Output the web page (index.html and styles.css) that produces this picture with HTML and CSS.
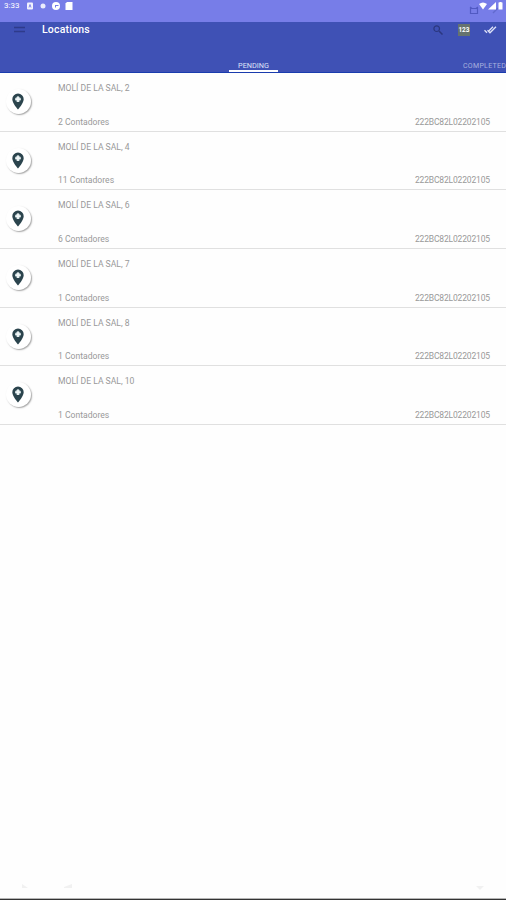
FILE: index.html
```html
<!DOCTYPE html>
<html lang="es">
<head>
  <meta charset="UTF-8" />
  <meta name="viewport" content="width=device-width, initial-scale=1.0" />
  <title>Locations</title>
  <link rel="stylesheet" href="styles.css">
</head>
<body>
  <!-- Icon shared by all rows -->
  <svg class="defs" width="0" height="0">
    <symbol id="pin" viewBox="0 0 12 17">
      <path fill="#2b444d" d="M6 .5a5.700 5.700 0 0 0-5.700 5.700c0 4 5.700 10.300 5.700 10.300s5.700-6.300 5.700-10.300A5.700 5.700 0 0 0 6 .5z"/>
      <circle cx="6" cy="6.200" r="2.700" fill="#9db3b8"/>
      <path d="M6 3.500v5.400M3.300 6.200h5.400" stroke="#f1f7f8" stroke-width="1.800"/>
    </symbol>
  </svg>

  <div class="status-bar">
    <span class="clock">3:33</span>
    <svg class="status-left" width="48" height="10" viewBox="0 0 48 10">
      <rect x="1" y="1.500" width="6" height="7" rx="1" fill="#fff" opacity=".9"/>
      <path d="M3 6.500l1-3 1 3" fill="none" stroke="#777de8" stroke-width=".9"/>
      <circle cx="17" cy="5" r="2.500" fill="#fff" opacity=".85"/>
      <circle cx="30" cy="5" r="4" fill="#fff"/>
      <path d="M29 4.500h3.500M29.500 4.500v2" fill="none" stroke="#777de8" stroke-width="1"/>
      <path d="M41 1h5.500v8h-7V2.500z" fill="#fff"/>
    </svg>
    <svg class="status-right" width="38" height="16" viewBox="0 0 38 16">
      <path d="M2.500 8.500h7v5h-7zM2 7l2 1.500M10 7l-2 1.500" fill="none" stroke="#5159c2" stroke-width="1.200"/>
      <path d="M25 13l5-5" fill="none" stroke="#626ace" stroke-width="1.500"/>
      <path d="M11 4q4-3 8 0L15 9.500z" fill="#fff"/>
      <path d="M28 2v7.500h-8z" fill="#fff"/>
      <path d="M30.500 2.500h1V2h2v.5h1v7h-4z" fill="#fff"/>
    </svg>
  </div>

  <header class="app-bar">
    <div class="toolbar">
      <svg class="menu" width="12" height="8" viewBox="0 0 12 8">
        <path d="M0 1.500h11M0 5.500h11" stroke="#2e3b8b" stroke-width="1.500"/>
      </svg>
      <h1>Locations</h1>
      <svg class="search" width="10" height="10" viewBox="0 0 10 10">
        <circle cx="3.700" cy="3.700" r="2.800" fill="none" stroke="#2b377f" stroke-width="1.200"/>
        <path d="M6 6l3.500 3.500" stroke="#2b377f" stroke-width="1.500"/>
      </svg>
      <span class="counter">123</span>
      <svg class="done-all" width="13" height="8" viewBox="0 0 13 8">
        <path d="M.5 4.300L3 6.800M3.500 4.300L6 6.800 12 .8M5 4.800l4-4" fill="none" stroke="#dfe3f8" stroke-width="1.300"/>
      </svg>
    </div>
    <nav class="tabs">
      <span class="tab active">PENDING</span>
      <span class="tab next">COMPLETED</span>
    </nav>
  </header>

  <ul class="locations">
    <li class="location">
      <span class="avatar"><svg width="12" height="17"><use href="#pin"/></svg></span>
      <div class="info">
        <p>MOLÍ DE LA SAL, 2</p>
        <p class="details"><span>2 Contadores</span><span class="serial">222BC82L02202105</span></p>
      </div>
    </li>
    <li class="location">
      <span class="avatar"><svg width="12" height="17"><use href="#pin"/></svg></span>
      <div class="info">
        <p>MOLÍ DE LA SAL, 4</p>
        <p class="details"><span>11 Contadores</span><span class="serial">222BC82L02202105</span></p>
      </div>
    </li>
    <li class="location">
      <span class="avatar"><svg width="12" height="17"><use href="#pin"/></svg></span>
      <div class="info">
        <p>MOLÍ DE LA SAL, 6</p>
        <p class="details"><span>6 Contadores</span><span class="serial">222BC82L02202105</span></p>
      </div>
    </li>
    <li class="location">
      <span class="avatar"><svg width="12" height="17"><use href="#pin"/></svg></span>
      <div class="info">
        <p>MOLÍ DE LA SAL, 7</p>
        <p class="details"><span>1 Contadores</span><span class="serial">222BC82L02202105</span></p>
      </div>
    </li>
    <li class="location">
      <span class="avatar"><svg width="12" height="17"><use href="#pin"/></svg></span>
      <div class="info">
        <p>MOLÍ DE LA SAL, 8</p>
        <p class="details"><span>1 Contadores</span><span class="serial">222BC82L02202105</span></p>
      </div>
    </li>
    <li class="location">
      <span class="avatar"><svg width="12" height="17"><use href="#pin"/></svg></span>
      <div class="info">
        <p>MOLÍ DE LA SAL, 10</p>
        <p class="details"><span>1 Contadores</span><span class="serial">222BC82L02202105</span></p>
      </div>
    </li>
  </ul>

  <footer class="bottom-bar">
    <svg width="506" height="8" viewBox="0 0 506 8">
      <path d="M22 2l6 4h-6zM64 5l8-3v4h-8zM476 4h8l-4 4z" fill="#f1f1f1"/>
    </svg>
  </footer>
</body>
</html>
```

FILE: styles.css
```css
* {
  box-sizing: border-box;
}
body {
  font-family: Roboto, "Liberation Sans", sans-serif;
  background-color: #fefefe;
  display: flex;
  flex-direction: column;
  height: 100vh;
  margin: 0;
  overflow: hidden;
}
svg {
  display: block;
  flex-shrink: 0;
}
.defs {
  position: absolute;
}
.status-bar {
  display: flex;
  align-items: flex-start;
  height: 22px;
  padding-left: 4px;
  background-color: #777de8;
  color: #fff;
}
.clock {
  width: 22px;
  padding-top: 1px;
  font-size: 8px;
  line-height: 10px;
}
.status-left {
  margin-top: 1px;
}
.status-right {
  margin-left: auto;
}
.app-bar {
  height: 51px;
  background-color: #3f51b5;
  border-bottom: 1px solid #1a3cae;
  color: #fff;
}
.toolbar {
  display: flex;
  align-items: center;
  height: 15px;
  padding: 0 9px 0 14px;
}
h1 {
  margin: 0 auto 0 16px;
  font-size: 10.5px;
  font-weight: 500;
  line-height: 15px;
  letter-spacing: 0.2px;
}
.counter {
  width: 12px;
  height: 12px;
  margin: 0 14px 0 15px;
  background-color: #66736f;
  font-size: 6.5px;
  font-weight: 700;
  line-height: 12px;
  text-align: center;
}
.tabs {
  display: grid;
  grid-template-columns: 229px 49px 185px 1fr;
  height: 35px;
  align-items: end;
}
.tab {
  font-size: 7px;
  line-height: 8px;
  white-space: nowrap;
}
.active {
  grid-column: 2;
  border-bottom: 2px solid #fff;
  color: #dfe3f8;
  font-size: 7.3px;
  text-align: center;
}
.next {
  grid-column: 4;
  padding-bottom: 2px;
  color: #a9b2df;
  letter-spacing: 0.3px;
}
.locations {
  margin: 0;
  padding: 0;
  list-style: none;
}
.location {
  display: flex;
  height: 58.7px;
  padding: 0 16px 0 6px;
  border-bottom: 1px solid #e0e0e0;
}
.avatar {
  display: flex;
  align-items: center;
  width: 25px;
  height: 25px;
  margin-top: 16px;
  padding-left: 6px;
  border-radius: 50%;
  background-color: #fff;
  box-shadow: 1px 1px 1.5px rgba(0, 0, 0, 0.35);
}
.info {
  display: flex;
  flex: 1;
  flex-direction: column;
  justify-content: space-between;
  margin-left: 27px;
  padding: 10px 0 3px;
}
p {
  margin: 0;
  color: #999;
  font-size: 8.6px;
  line-height: 11px;
}
.details {
  display: flex;
  justify-content: space-between;
}
.serial {
  font-size: 8.5px;
  letter-spacing: -0.15px;
}
.bottom-bar {
  height: 18px;
  margin-top: auto;
  border-bottom: 1px solid #333;
  box-shadow: inset 0 -1px #b5b5b5;
}
```
